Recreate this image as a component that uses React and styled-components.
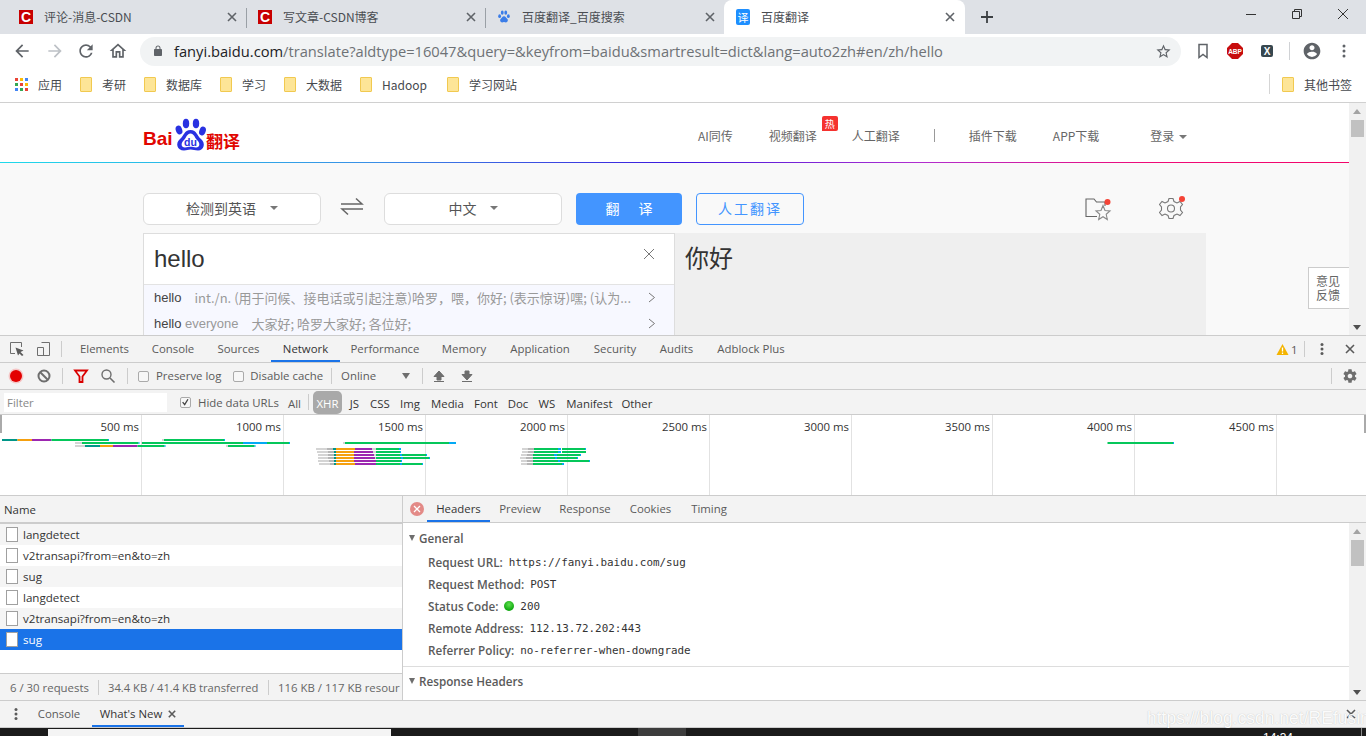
import React from 'react';
import styled, { createGlobalStyle } from 'styled-components';

const UI_FONT = '"Open Sans", "Noto Sans CJK SC", sans-serif';
const CJK_FONT = '"Noto Sans CJK SC", "Open Sans", sans-serif';

const GlobalStyle = createGlobalStyle`
    html, body {
        margin: 0;
        padding: 0;
        width: 1366px;
        height: 736px;
        overflow: hidden;
        background: #fff;
    }
`;

const Screen = styled.div`
    position: relative;
    display: flex;
    flex-direction: column;
    width: 1366px;
    height: 736px;
    overflow: hidden;
    font-family: ${UI_FONT};
    color: #333;
`;

/* browser chrome */
const TabStrip = styled.div`
    display: flex;
    align-items: stretch;
    height: 34px;
    padding-left: 8px;
    background: #dee1e6;
    flex-shrink: 0;
`;

const Tab = styled.div`
    display: flex;
    align-items: center;
    width: ${(p) => (p.$active ? 241 : 239)}px;
    height: 34px;
    padding-left: ${(p) => (p.$active ? 12 : 11)}px;
    box-sizing: border-box;
    flex-shrink: 0;
    margin-left: ${(p) => (p.$active ? -1 : 0)}px;
    border-radius: 8px 8px 0 0;
    background: ${(p) => (p.$active ? '#fff' : 'transparent')};
`;

const TabTitle = styled.span`
    flex: 1;
    margin-left: 11px;
    padding-bottom: 2px;
    font-family: ${CJK_FONT};
    font-size: 12px;
    color: #4a4d52;
    white-space: nowrap;
`;

const TabClose = styled.svg`
    width: 10px;
    height: 10px;
    margin-right: 3px;
    flex-shrink: 0;
`;

const CloseSlot = styled.div`
    display: flex;
    margin-right: 7px;
`;

const TabDivider = styled.div`
    width: 1px;
    height: 20px;
    margin-top: 8px;
    background: #9aa0a6;
    flex-shrink: 0;
    margin-left: -1px;
`;

const CsdnIcon = styled.span`
    width: 14px;
    height: 14px;
    flex-shrink: 0;
    background: #c80000;
    color: #fff;
    font: bold 14px/14px "Liberation Sans", sans-serif;
    text-align: center;
`;

const FanyiIcon = styled.span`
    width: 14px;
    height: 16px;
    flex-shrink: 0;
    border-radius: 2px;
    background: #1e8fff;
    color: #fff;
    font: 11px/16px ${CJK_FONT};
    text-align: center;
`;

const PlusButton = styled.svg`
    width: 12px;
    height: 12px;
    margin: 11px 0 0 16px;
`;

const WindowControls = styled.div`
    display: flex;
    margin-left: auto;
    padding-right: 17px;
    gap: 34px;
    align-items: flex-start;
    padding-top: 8px;
`;

const Toolbar = styled.div`
    display: flex;
    align-items: center;
    height: 34px;
    flex-shrink: 0;
    background: #fff;
`;

const NavIcon = styled.svg`
    width: ${(p) => p.$size || 20}px;
    height: ${(p) => p.$size || 20}px;
    margin-left: ${(p) => p.$ml || 0}px;
    margin-right: ${(p) => p.$mr || 0}px;
    flex-shrink: 0;
    fill: ${(p) => p.$color || '#5f6368'};
`;

const Omnibox = styled.div`
    display: flex;
    align-items: center;
    width: 1041px;
    height: 29px;
    margin-left: 12px;
    padding-left: 12px;
    box-sizing: border-box;
    border-radius: 15px;
    background: #f1f3f4;
    flex-shrink: 0;
`;

const UrlText = styled.div`
    flex: 1;
    margin-left: 10px;
    font-size: 14.68px;
    color: #6e7276;
    white-space: nowrap;
    b {
        font-weight: 400;
        color: #202124;
    }
`;

const ToolbarSep = styled.div`
    width: 1px;
    height: 18px;
    margin-left: 14px;
    background: #d0d2d5;
`;

const BookmarkBar = styled.div`
    display: flex;
    align-items: center;
    height: 35px;
    box-sizing: border-box;
    flex-shrink: 0;
    padding: 0 0 2px 15px;
    border-bottom: 1px solid #d0d0d0;
    background: #fff;
`;

const Bookmark = styled.div`
    display: flex;
    align-items: center;
    margin-left: ${(p) => p.$ml || 18}px;
    margin-right: ${(p) => p.$mr || 0}px;
    font-family: ${CJK_FONT};
    font-size: 12px;
    color: #46494e;
    white-space: nowrap;
`;

const Folder = styled.span`
    width: 10px;
    height: 13px;
    margin-right: 10px;
    border: 1px solid #f1c950;
    border-radius: 1px;
    background: #fde597;
`;

const BookmarkSep = styled.div`
    width: 1px;
    height: 20px;
    margin-left: auto;
    background: #d5d5d5;
`;

/* translate page */
const Page = styled.div`
    display: flex;
    height: 232px;
    flex-shrink: 0;
    overflow: hidden;
`;

const PageBody = styled.div`
    position: relative;
    width: 1349px;
    height: 232px;
    background: #f9f9f9;
    font-family: ${CJK_FONT};
    overflow: hidden;
`;

const PageHeader = styled.div`
    display: flex;
    align-items: center;
    height: 59px;
    box-sizing: border-box;
    padding: 6px 0 0 143px;
    background: #fff;
`;

const NavLink = styled.div`
    position: relative;
    margin-left: ${(p) => p.$ml}px;
    font-size: 12px;
    color: #666;
    white-space: nowrap;
`;

const HotBadge = styled.span`
    position: absolute;
    left: 53px;
    top: -11px;
    width: 16px;
    height: 15px;
    background: #f5322f;
    color: #fff;
    font-size: 10px;
    line-height: 15px;
    text-align: center;
    border-radius: 2px 2px 2px 0;
`;

const NavDivider = styled.div`
    width: 1px;
    height: 13px;
    margin-left: 34px;
    background: #999;
`;

const Caret = styled.span`
    display: inline-block;
    margin-left: ${(p) => p.$ml || 5}px;
    border-left: 4px solid transparent;
    border-right: 4px solid transparent;
    border-top: 4px solid ${(p) => p.$color || '#777'};
    vertical-align: 2px;
`;

const GradientLine = styled.div`
    height: 1px;
    background: linear-gradient(90deg, #1fd9ea 0%, #3a8ee6 28%, #3c18de 50%, #b02ed0 68%, #ee0b78 85%, #f2056a 100%);
`;

const Controls = styled.div`
    display: flex;
    align-items: center;
    height: 32px;
    margin-top: 30px;
    padding-left: 143px;
`;

const LangSelect = styled.div`
    display: flex;
    justify-content: center;
    align-items: center;
    width: 178px;
    height: 32px;
    box-sizing: border-box;
    padding-bottom: 2px;
    border: 1px solid #ddd;
    border-radius: 6px;
    background: #fff;
    font-size: 14px;
    color: #555;
`;

const SwapIcon = styled.svg`
    width: 24px;
    height: 20px;
    margin: -6px 20px 0 19px;
`;

const TranslateButton = styled.div`
    width: 106px;
    height: 32px;
    margin-left: 14px;
    border-radius: 4px;
    background: #4395ff;
    color: #fff;
    font-size: 14px;
    line-height: 30px;
    text-align: center;
    white-space: pre;
`;

const HumanButton = styled.div`
    width: 108px;
    height: 32px;
    box-sizing: border-box;
    margin-left: 14px;
    border: 1px solid #4395ff;
    border-radius: 4px;
    color: #4395ff;
    font-size: 14px;
    line-height: 28px;
    letter-spacing: 2px;
    text-align: center;
`;

const ToolIcon = styled.svg`
    width: ${(p) => p.$w}px;
    height: 28px;
    margin-left: ${(p) => p.$ml}px;
    margin-top: -4px;
    flex-shrink: 0;
`;

const Panels = styled.div`
    display: flex;
    width: 1063px;
    height: 110px;
    margin: 8px 0 0 143px;
`;

const SourcePanel = styled.div`
    width: 532px;
    box-sizing: border-box;
    border: 1px solid #ddd;
    border-bottom: none;
    background: #fff;
`;

const SourceInput = styled.div`
    display: flex;
    justify-content: space-between;
    align-items: center;
    height: 50px;
    padding: 0 19px 0 10px;
    border-bottom: 1px solid #e3e3e3;
    font-family: "Liberation Sans", sans-serif;
    font-size: 24px;
    color: #333;
`;

const ClearIcon = styled.svg`
    width: 12px;
    height: 12px;
    margin-top: -10px;
`;

const Suggestions = styled.div`
    height: 60px;
    background: #f7f8ff;
`;

const SuggestionRow = styled.div`
    display: flex;
    align-items: center;
    height: 26px;
    box-sizing: border-box;
    padding: 0 18px 2px 10px;
    font-size: 13px;
    color: #999;
`;

const SuggestionWord = styled.span`
    color: #444;
    font-family: "Liberation Sans", sans-serif;
    em {
        font-style: normal;
        color: #999;
    }
`;

const SuggestionText = styled.span`
    flex: 1;
    min-width: 0;
    margin-left: 13px;
    white-space: nowrap;
`;

const ChevronIcon = styled.svg`
    width: 8px;
    height: 11px;
    margin-left: 4px;
    flex-shrink: 0;
`;

const TargetPanel = styled.div`
    flex: 1;
    padding: 6px 10px;
    background: #efefef;
    font-size: 24px;
    line-height: 36px;
    color: #333;
`;

const Feedback = styled.div`
    position: absolute;
    right: 0;
    top: 164px;
    width: 41px;
    height: 42px;
    box-sizing: border-box;
    padding: 6px 0 0 7px;
    border: 1px solid #ccc;
    border-right: none;
    background: #fff;
    font-size: 12px;
    line-height: 14px;
    color: #666;
`;

const Scrollbar = styled.div`
    position: relative;
    width: 17px;
    background: #f1f1f1;
    flex-shrink: 0;
    height: ${(p) => p.$h}px;
`;

const ScrollThumb = styled.div`
    position: absolute;
    left: 2px;
    top: ${(p) => p.$top}px;
    width: 13px;
    height: ${(p) => p.$h}px;
    background: #c1c1c1;
`;

const ScrollArrow = styled.div`
    position: absolute;
    left: 4px;
    ${(p) => (p.$down ? 'bottom: 5px;' : 'top: 6px;')}
    border-left: 4.5px solid transparent;
    border-right: 4.5px solid transparent;
    ${(p) => (p.$down ? 'border-top: 5px solid #505050;' : 'border-bottom: 5px solid #a3a3a3;')}
`;

/* devtools */
const DevTools = styled.div`
    display: flex;
    flex-direction: column;
    height: 393px;
    flex-shrink: 0;
    background: #f3f3f3;
    font-size: 11.4px;
    color: #5a5a5a;
`;

const DevBar = styled.div`
    display: flex;
    align-items: center;
    height: ${(p) => p.$h}px;
    box-sizing: border-box;
    flex-shrink: 0;
    border-top: ${(p) => (p.$top ? '1px solid #ccc' : 'none')};
    border-bottom: 1px solid #ccc;
    background: #f3f3f3;
`;

const DevTab = styled.div`
    display: flex;
    align-items: center;
    justify-content: center;
    width: ${(p) => p.$w}px;
    height: 100%;
    margin-left: ${(p) => p.$ml || 0}px;
    box-sizing: border-box;
    flex-shrink: 0;
    white-space: nowrap;
    color: ${(p) => (p.$active ? '#333' : '#5a5a5a')};
    border-bottom: 2px solid ${(p) => (p.$active ? '#1a73e8' : 'transparent')};
    padding-top: 1px;
`;

const DevIcon = styled.svg`
    width: ${(p) => p.$size || 16}px;
    height: ${(p) => p.$size || 16}px;
    margin-left: ${(p) => p.$ml || 0}px;
    flex-shrink: 0;
`;

const DevSep = styled.div`
    width: 1px;
    height: 16px;
    margin-left: ${(p) => p.$ml || 0}px;
    background: #ccc;
    flex-shrink: 0;
`;

const CheckBox = styled.span`
    display: flex;
    width: 11px;
    height: 11px;
    margin-left: ${(p) => p.$ml}px;
    flex-shrink: 0;
    border: 1px solid #aaa;
    border-radius: 2px;
    box-sizing: border-box;
    background: #f7f7f7;
`;

const BarLabel = styled.span`
    margin-left: ${(p) => p.$ml}px;
    padding-bottom: ${(p) => p.$pb || 0}px;
    padding-top: ${(p) => p.$pt || 0}px;
    white-space: nowrap;
`;

const FilterInput = styled.div`
    width: 163px;
    height: 19px;
    margin-left: 4px;
    padding-left: 3px;
    box-sizing: border-box;
    background: #fff;
    color: #888;
    font-size: 11.4px;
    line-height: 19px;
    flex-shrink: 0;
`;

const TypeChip = styled.span`
    display: flex;
    align-items: center;
    justify-content: center;
    width: ${(p) => p.$w}px;
    height: 23px;
    box-sizing: border-box;
    padding-top: 2px;
    flex-shrink: 0;
    border-radius: ${(p) => (p.$active ? '5px' : '0')};
    background: ${(p) => (p.$active ? '#a9a9a9' : 'transparent')};
    color: ${(p) => (p.$active ? '#fff' : '#333')};
`;

const Overview = styled.div`
    position: relative;
    display: flex;
    height: 81px;
    box-sizing: border-box;
    flex-shrink: 0;
    border-bottom: 1px solid #ccc;
    background: #fff;
`;

const TimeColumn = styled.div`
    width: ${(p) => p.$w}px;
    flex-shrink: 0;
    box-sizing: border-box;
    border-right: 1px solid #e2e2e2;
    padding: 4px 2px 0 0;
    color: #333;
    font-size: 11.4px;
    text-align: right;
    white-space: nowrap;
`;

const Waterfall = styled.svg`
    position: absolute;
    left: 0;
    top: 0;
    width: 1366px;
    height: 80px;
`;

const OverviewHandle = styled.div`
    position: absolute;
    top: 0;
    ${(p) => (p.$right ? 'right: 0;' : 'left: 0;')}
    width: 2px;
    height: 18px;
    background: #aaa;
`;

const Split = styled.div`
    display: flex;
    height: 204px;
    flex-shrink: 0;
    border-bottom: 1px solid #ccc;
`;

const NamePane = styled.div`
    display: flex;
    flex-direction: column;
    width: 402px;
    flex-shrink: 0;
    border-right: 1px solid #ccc;
    background: #fff;
`;

const NameHeader = styled.div`
    height: 28px;
    box-sizing: border-box;
    padding-left: 4px;
    border-bottom: 2px solid #ccc;
    background: #f3f3f3;
    line-height: 27px;
    color: #333;
`;

const RequestRow = styled.div`
    display: flex;
    align-items: center;
    height: 21px;
    padding-left: 6px;
    font-size: 11.6px;
    background: ${(p) => (p.$selected ? '#1a73e8' : p.$odd ? '#f5f5f5' : '#fff')};
    color: ${(p) => (p.$selected ? '#fff' : '#333')};
`;

const FileIcon = styled.span`
    width: 12px;
    height: 15px;
    margin-right: 5px;
    box-sizing: border-box;
    border: 1px solid #a0a0a0;
    background: #fff;
`;

const StatusBar = styled.div`
    display: flex;
    align-items: center;
    height: 27px;
    margin-top: auto;
    box-sizing: border-box;
    border-top: 1px solid #ccc;
    background: #f3f3f3;
    overflow: hidden;
    white-space: nowrap;
`;

const StatusItem = styled.span`
    flex-shrink: 0;
    padding-left: ${(p) => p.$pl}px;
    width: ${(p) => p.$w}px;
    box-sizing: border-box;
    border-right: ${(p) => (p.$last ? 'none' : '1px solid #ccc')};
    font-size: ${(p) => p.$size || 11.4}px;
    line-height: 15px;
    color: #666;
`;

const DetailPane = styled.div`
    flex: 1;
    min-width: 0;
    display: flex;
    flex-direction: column;
    background: #fff;
`;

const DetailTabs = styled.div`
    display: flex;
    align-items: center;
    height: 27px;
    box-sizing: border-box;
    flex-shrink: 0;
    border-bottom: 1px solid #ccc;
    background: #f3f3f3;
`;

const DetailBody = styled.div`
    display: flex;
    flex: 1;
    min-height: 0;
`;

const DetailScroll = styled.div`
    flex: 1;
    min-width: 0;
`;

const GeneralBlock = styled.div`
    height: 144px;
    box-sizing: border-box;
    padding-top: 7px;
    border-bottom: 1px solid #ddd;
`;

const SectionTitle = styled.div`
    display: flex;
    align-items: center;
    height: 16px;
    margin-top: ${(p) => p.$mt || 0}px;
    margin-bottom: ${(p) => p.$mb || 0}px;
    padding-left: 6px;
    font-size: 11.7px;
    font-weight: 600;
    color: #5a5a5a;
`;

const TriangleDown = styled.span`
    width: 0;
    height: 0;
    margin-right: 4px;
    border-left: 3.5px solid transparent;
    border-right: 3.5px solid transparent;
    border-top: 6px solid #6e6e6e;
`;

const HeaderRow = styled.div`
    display: flex;
    align-items: center;
    height: 22px;
    padding-left: 25px;
    white-space: nowrap;
`;

const HeaderName = styled.span`
    font-size: 11.7px;
    font-weight: 600;
    color: #5a5a5a;
`;

const HeaderValue = styled.span`
    margin-left: 6px;
    font-family: "DejaVu Sans Mono", monospace;
    font-size: 10.9px;
    color: #333;
`;

const StatusDot = styled.span`
    width: 10px;
    height: 10px;
    margin-left: 6px;
    border-radius: 50%;
    background: radial-gradient(circle at 50% 35%, #5fe04f, #0fa80f 70%);
`;

const Taskbar = styled.div`
    display: flex;
    height: 8px;
    flex-shrink: 0;
    background: #1b1b1b;
    overflow: hidden;
`;

const TaskWhite = styled.div`
    width: 343px;
    margin: 1px 0 0 48px;
    background: #f4f4f4;
`;

const TaskActive = styled.div`
    width: 48px;
    margin-left: 247px;
    background: #3c3c3c;
`;

const TaskClock = styled.div`
    margin-left: 577px;
    padding-top: 4px;
    color: #fff;
    font-family: "Liberation Sans", sans-serif;
    font-size: 12px;
    line-height: 12px;
`;

const TaskEdge = styled.div`
    width: 1px;
    margin-left: 68px;
    background: #8a8a8a;
`;

const Watermark = styled.div`
    position: absolute;
    left: 1147px;
    top: 707px;
    font-family: "Liberation Sans", sans-serif;
    font-size: 17.5px;
    line-height: 22px;
    color: rgba(255, 255, 255, 0.95);
    text-shadow: 0 0 1px rgba(130, 130, 130, 0.5);
    white-space: nowrap;
`;

const LogoBox = styled.svg`
    width: 97px;
    height: 36px;
    flex-shrink: 0;
    margin-top: -1px;
`;

const XMark = ({ color = '#5f6368', width = 1.6 }) => (
    <path d="M1 1 L9 9 M9 1 L1 9" stroke={color} strokeWidth={width} fill="none" />
);

const paths = {
    back: 'M20 11H7.83l5.59-5.59L12 4l-8 8 8 8 1.41-1.41L7.83 13H20v-2z',
    forward: 'M12 4l-1.41 1.41L16.17 11H4v2h12.17l-5.58 5.59L12 20l8-8z',
    reload: 'M17.65 6.35A7.958 7.958 0 0 0 12 4c-4.42 0-7.99 3.58-7.99 8s3.57 8 7.99 8c3.73 0 6.84-2.55 7.73-6h-2.08A5.99 5.99 0 0 1 12 18c-3.31 0-6-2.69-6-6s2.69-6 6-6c1.66 0 3.14.69 4.22 1.78L13 11h7V4l-2.35 2.35z',
    home: 'M12 5.69l5 4.5V18h-2v-6H9v6H7v-7.81l5-4.5M12 3L2 12h3v8h6v-6h2v6h6v-8h3L12 3z',
    lock: 'M18 8h-1V6c0-2.76-2.24-5-5-5S7 3.24 7 6v2H6c-1.1 0-2 .9-2 2v10c0 1.1.9 2 2 2h12c1.1 0 2-.9 2-2V10c0-1.1-.9-2-2-2zM9 6c0-1.66 1.34-3 3-3s3 1.34 3 3v2H9V6z',
    star: 'M22 9.24l-7.19-.62L12 2 9.19 8.63 2 9.24l5.46 4.73L5.82 21 12 17.27 18.18 21l-1.63-7.03L22 9.24zM12 15.4l-3.76 2.27 1-4.28-3.32-2.88 4.38-.38L12 6.1l1.71 4.04 4.38.38-3.32 2.88 1 4.28L12 15.4z',
    account: 'M12 2C6.48 2 2 6.48 2 12s4.48 10 10 10 10-4.48 10-10S17.52 2 12 2zm0 3c1.66 0 3 1.34 3 3s-1.34 3-3 3-3-1.34-3-3 1.34-3 3-3zm0 14.2a7.2 7.2 0 0 1-6-3.22c.03-1.99 4-3.08 6-3.08 1.99 0 5.97 1.09 6 3.08a7.2 7.2 0 0 1-6 3.22z',
    gear: 'M19.43 12.98c.04-.32.07-.64.07-.98s-.03-.66-.07-.98l2.11-1.65c.19-.15.24-.42.12-.64l-2-3.46c-.12-.22-.39-.3-.61-.22l-2.49 1c-.52-.4-1.08-.73-1.69-.98l-.38-2.65A.488.488 0 0 0 14 2h-4c-.25 0-.46.18-.49.42l-.38 2.65c-.61.25-1.17.59-1.69.98l-2.49-1c-.23-.09-.49 0-.61.22l-2 3.46c-.13.22-.07.49.12.64l2.11 1.65c-.04.32-.07.65-.07.98s.03.66.07.98l-2.11 1.65c-.19.15-.24.42-.12.64l2 3.46c.12.22.39.3.61.22l2.49-1c.52.4 1.08.73 1.69.98l.38 2.65c.03.24.24.42.49.42h4c.25 0 .46-.18.49-.42l.38-2.65c.61-.25 1.17-.59 1.69-.98l2.49 1c.23.09.49 0 .61-.22l2-3.46c.12-.22.07-.49-.12-.64l-2.11-1.65zM12 15.5c-1.93 0-3.5-1.57-3.5-3.5s1.57-3.5 3.5-3.5 3.5 1.57 3.5 3.5-1.57 3.5-3.5 3.5z',
};

const PawFavicon = () => (
    <DevIcon $size={14} viewBox="0 0 16 16">
        <ellipse cx="3" cy="7" rx="1.6" ry="2.2" fill="#3b7de8" />
        <ellipse cx="6" cy="3" rx="1.6" ry="2.3" fill="#3b7de8" />
        <ellipse cx="10" cy="3" rx="1.6" ry="2.3" fill="#3b7de8" />
        <ellipse cx="13" cy="7" rx="1.6" ry="2.2" fill="#3b7de8" />
        <path d="M8 7c-2 0-2.3 2-3.6 3-1.6 1.3-.7 4.3 1.6 4.2 1 0 1.3-.4 2-.4s1 .4 2 .4c2.3.1 3.2-2.9 1.6-4.2C10.3 9 10 7 8 7z" fill="#3b7de8" />
    </DevIcon>
);

const tabs = [
    { title: '评论-消息-CSDN', icon: 'csdn' },
    { title: '写文章-CSDN博客', icon: 'csdn' },
    { title: '百度翻译_百度搜索', icon: 'paw' },
    { title: '百度翻译', icon: 'fanyi', active: true },
];

const bookmarks = [
    { label: '考研', ml: 18 },
    { label: '数据库', ml: 18 },
    { label: '学习', ml: 18 },
    { label: '大数据', ml: 18 },
    { label: 'Hadoop', ml: 18 },
    { label: '学习网站', ml: 20 },
];

const panelTabs = [
    ['Elements', 71], ['Console', 66], ['Sources', 65], ['Network', 69], ['Performance', 90],
    ['Memory', 68], ['Application', 84], ['Security', 66], ['Audits', 57], ['Adblock Plus', 92],
];

const detailTabs = [['Preview', 60], ['Response', 70], ['Cookies', 61], ['Timing', 56]];

const typeChips = [
    ['XHR', 29, 4], ['JS', 11, 7], ['CSS', 20, 10], ['Img', 20, 10], ['Media', 33, 11],
    ['Font', 24, 10], ['Doc', 20, 10], ['WS', 18, 10], ['Manifest', 45, 11], ['Other', 30, 10],
];

// the last tick sits a pixel closer on the 3500 ms column
const timeColumns = [
    ['500 ms', 142], ['1000 ms', 142], ['1500 ms', 142], ['2000 ms', 142], ['2500 ms', 142],
    ['3000 ms', 142], ['3500 ms', 141], ['4000 ms', 142], ['4500 ms', 142], ['', 90],
];

const requests = ['langdetect', 'v2transapi?from=en&to=zh', 'sug', 'langdetect', 'v2transapi?from=en&to=zh', 'sug'];

const headerRows = [
    ['Request URL:', 'https://fanyi.baidu.com/sug'],
    ['Request Method:', 'POST'],
    ['Status Code:', '200', true],
    ['Remote Address:', '112.13.72.202:443'],
    ['Referrer Policy:', 'no-referrer-when-downgrade'],
];

const C = {
    T: '#009688', O: '#f5a00f', P: '#9c27b0', G: '#05c75a', B: '#03a9f4', L: '#d4d4d4', D: '#b5b5b5',
};

// [top of the row inside the overview, from, to, colour]
const bars = [
    [24, 2, 17.5, 'T'], [24, 17.5, 32, 'O'], [24, 32, 51.5, 'P'], [24, 51.5, 108, 'G'], [24, 108, 109, 'B'],
    [24, 162, 164, 'L'], [24, 164, 224, 'G'], [24, 224, 225, 'B'],
    [27, 75, 82, 'L'], [27, 82, 138.5, 'G'], [27, 138.5, 139.5, 'B'], [27, 141, 142, 'L'], [27, 142, 243, 'G'],
    [27, 243, 267, 'B'], [27, 267, 289, 'G'], [27, 289, 290, 'B'], [27, 343, 345, 'L'], [27, 345, 449, 'G'], [27, 449, 456, 'B'],
    [27, 1107.5, 1173, 'G'], [27, 1173, 1174, 'B'],
    [30, 75, 85, 'L'], [30, 85, 100, 'T'], [30, 100, 113, 'O'], [30, 113, 137.5, 'P'], [30, 137.5, 164.5, 'G'], [30, 164.5, 165.5, 'B'],
    [30, 226, 228, 'L'], [30, 228, 254.5, 'G'], [30, 254.5, 255.5, 'B'],
    // second burst
    [33, 316, 327, 'L'], [33, 327, 333, 'D'], [33, 333, 336, 'T'], [33, 336, 355, 'O'], [33, 355, 372, 'P'], [33, 372, 376, 'L'], [33, 376, 399, 'G'], [33, 399, 401, 'B'],
    [36, 317, 328, 'L'], [36, 328, 334, 'D'], [36, 334, 336, 'T'], [36, 336, 354, 'O'], [36, 354, 373, 'P'], [36, 373, 376, 'L'], [36, 376, 400, 'G'], [36, 400, 401, 'B'],
    [39, 318, 328, 'L'], [39, 328, 334, 'D'], [39, 334, 336, 'T'], [39, 336, 354, 'O'], [39, 354, 374, 'P'], [39, 374, 376, 'L'], [39, 376, 400, 'G'], [39, 400, 402, 'B'], [39, 402, 426, 'G'], [39, 426, 427, 'B'],
    [42, 318, 328, 'L'], [42, 328, 334, 'D'], [42, 334, 336, 'T'], [42, 336, 354, 'O'], [42, 354, 375, 'P'], [42, 375, 376, 'L'], [42, 376, 401, 'G'], [42, 401, 403, 'B'], [42, 403, 429, 'G'], [42, 429, 430, 'B'],
    [45, 318, 329, 'L'], [45, 329, 334, 'D'], [45, 334, 336, 'T'], [45, 336, 354, 'O'], [45, 354, 376, 'P'], [45, 376, 401, 'G'], [45, 401, 402, 'B'],
    [48, 319, 330, 'L'], [48, 330, 334, 'D'], [48, 334, 336, 'T'], [48, 336, 355, 'O'], [48, 355, 376, 'P'], [48, 376, 400, 'G'], [48, 400, 402, 'B'], [48, 402, 422, 'G'], [48, 422, 423, 'B'],
    // third burst
    [33, 522, 528, 'L'], [33, 528, 534, 'D'], [33, 534, 558, 'G'], [33, 558, 561, 'B'], [33, 562, 585, 'G'], [33, 585, 586, 'B'],
    [36, 522, 528, 'L'], [36, 528, 534, 'D'], [36, 534, 558, 'G'], [36, 558, 561, 'B'], [36, 562, 586, 'G'],
    [39, 521, 527, 'L'], [39, 527, 533, 'D'], [39, 533, 554, 'G'], [39, 554, 557, 'B'], [39, 557, 580, 'G'], [39, 580, 581, 'B'],
    [42, 520, 526, 'L'], [42, 526, 533, 'D'], [42, 533, 555, 'G'], [42, 555, 557, 'B'], [42, 557, 577, 'G'], [42, 577, 578, 'B'],
    [45, 521, 527, 'L'], [45, 527, 533, 'D'], [45, 533, 558, 'G'], [45, 558, 560, 'B'], [45, 560, 589, 'G'], [45, 589, 590, 'B'],
    [48, 521, 527, 'L'], [48, 527, 533, 'D'], [48, 533, 562, 'G'], [48, 562, 564, 'B'],
];

const TabIcon = ({ kind }) => {
    if (kind === 'csdn') return <CsdnIcon>C</CsdnIcon>;
    if (kind === 'fanyi') return <FanyiIcon>译</FanyiIcon>;
    return <PawFavicon />;
};

const App = () => (
    <Screen>
        <GlobalStyle />
        <TabStrip>
            {tabs.map((tab, i) => (
                <React.Fragment key={tab.title}>
                    <Tab $active={tab.active}>
                        <TabIcon kind={tab.icon} />
                        <TabTitle>{tab.title}</TabTitle>
                        <CloseSlot>
                            <TabClose viewBox="0 0 10 10"><XMark /></TabClose>
                        </CloseSlot>
                    </Tab>
                    {i < 2 && <TabDivider />}
                </React.Fragment>
            ))}
            <PlusButton viewBox="0 0 12 12"><path d="M6 0V12M0 6H12" stroke="#3c4043" strokeWidth="1.8" /></PlusButton>
            <WindowControls>
                <DevIcon $size={12} viewBox="0 0 12 12"><path d="M1 6.5H11" stroke="#333" /></DevIcon>
                <DevIcon $size={12} viewBox="0 0 12 12"><path d="M1.5 3.5H8.5V10.5H1.5ZM3.5 3.5V1.5H10.5V8.5H8.5" stroke="#333" fill="none" /></DevIcon>
                <DevIcon $size={12} viewBox="0 0 12 12"><path d="M1 1L11 11M11 1L1 11" stroke="#333" /></DevIcon>
            </WindowControls>
        </TabStrip>

        <Toolbar>
            <NavIcon $ml={12} viewBox="0 0 24 24"><path d={paths.back} /></NavIcon>
            <NavIcon $ml={13} $color="#bdc1c6" viewBox="0 0 24 24"><path d={paths.forward} /></NavIcon>
            <NavIcon $ml={11} viewBox="0 0 24 24"><path d={paths.reload} /></NavIcon>
            <NavIcon $ml={12} viewBox="0 0 24 24"><path d={paths.home} /></NavIcon>
            <Omnibox>
                <NavIcon $size={12} viewBox="0 0 24 24"><path d={paths.lock} /></NavIcon>
                <UrlText><b>fanyi.baidu.com</b>/translate?aldtype=16047&amp;query=&amp;keyfrom=baidu&amp;smartresult=dict&amp;lang=auto2zh#en/zh/hello</UrlText>
                <NavIcon $size={17} $mr={9} viewBox="0 0 24 24"><path d={paths.star} /></NavIcon>
            </Omnibox>
            <NavIcon $ml={14} $size={16} viewBox="0 0 16 16"><path d="M4 1.5H12V14.5L8 11.5L4 14.5Z" fill="none" stroke="#5f6368" strokeWidth="1.5" /></NavIcon>
            <NavIcon $ml={16} $size={16} viewBox="0 0 16 16">
                <path d="M5 0H11L16 5V11L11 16H5L0 11V5Z" fill="#c70d0d" />
                <text x="8" y="10.5" fontSize="6.5" fontWeight="700" fontFamily="Liberation Sans" fill="#fff" textAnchor="middle">ABP</text>
            </NavIcon>
            <NavIcon $ml={16} $size={16} viewBox="0 0 16 16">
                <rect x="2" y="2" width="12" height="12" rx="2" fill="#37474f" />
                <text x="8" y="11.5" fontSize="10" fontWeight="700" fontFamily="Liberation Sans" fill="#fff" textAnchor="middle">X</text>
            </NavIcon>
            <ToolbarSep />
            <NavIcon $ml={12} viewBox="0 0 24 24"><path d={paths.account} /></NavIcon>
            <NavIcon $ml={14} $size={16} viewBox="0 0 16 16">
                <circle cx="8" cy="3" r="1.5" /><circle cx="8" cy="8" r="1.5" /><circle cx="8" cy="13" r="1.5" />
            </NavIcon>
        </Toolbar>

        <BookmarkBar>
            <DevIcon $size={13} viewBox="0 0 13 13">
                {['#ea4335', '#fbbc05', '#4285f4', '#34a853', '#ea4335', '#fbbc05', '#4285f4', '#34a853', '#ea4335'].map((fill, i) => (
                    <rect key={i} x={(i % 3) * 5} y={Math.floor(i / 3) * 5} width="3" height="3" fill={fill} />
                ))}
            </DevIcon>
            <Bookmark $ml={10}>应用</Bookmark>
            {bookmarks.map((item) => (
                <Bookmark key={item.label} $ml={item.ml}><Folder />{item.label}</Bookmark>
            ))}
            <BookmarkSep />
            <Bookmark $ml={12} $mr={14}><Folder />其他书签</Bookmark>
        </BookmarkBar>

        <Page>
            <PageBody>
                <PageHeader>
                    <LogoBox viewBox="0 0 97 36">
                        <text x="0" y="28" fontFamily="Liberation Sans" fontWeight="700" fontSize="19" fill="#e10601">Bai</text>
                        <ellipse cx="36" cy="13" rx="3.2" ry="4.5" fill="#2932e1" transform="rotate(-20 36 13)" />
                        <ellipse cx="43" cy="6.5" rx="3.2" ry="4.8" fill="#2932e1" />
                        <ellipse cx="53" cy="6.5" rx="3.2" ry="4.8" fill="#2932e1" />
                        <ellipse cx="59.5" cy="14" rx="3.2" ry="4.5" fill="#2932e1" transform="rotate(20 59.5 14)" />
                        <path d="M47.5 13C41 13 41 19 37 22C32 26 34 33.5 41 33.5C44 33.5 45 32.5 47.5 32.5C50 32.5 52 33.5 55 33.5C61 33.5 63 26 58 22C54 19 54 13 47.5 13Z" fill="#2932e1" />
                        <path d="M47.5 16.5C44 16.5 43.5 20.5 41 23C37.5 26 38 30.5 42 30.5C44 30.5 45.5 29.8 47.5 29.8C49.5 29.8 51 30.5 53 30.5C57 30.5 57.5 26 54 23C51.5 20.5 51 16.5 47.5 16.5Z" fill="#fff" />
                        <text x="47.5" y="29" fontFamily="Liberation Sans" fontWeight="700" fontSize="10.5" fill="#2932e1" textAnchor="middle">du</text>
                        <text x="63" y="31" fontFamily="Noto Sans CJK SC" fontWeight="700" fontSize="17" fill="#e10601">翻译</text>
                    </LogoBox>
                    <NavLink $ml={458}>AI同传</NavLink>
                    <NavLink $ml={36}>视频翻译<HotBadge>热</HotBadge></NavLink>
                    <NavLink $ml={35}>人工翻译</NavLink>
                    <NavDivider />
                    <NavLink $ml={34}>插件下载</NavLink>
                    <NavLink $ml={36}>APP下载</NavLink>
                    <NavLink $ml={51}>登录<Caret /></NavLink>
                </PageHeader>
                <GradientLine />
                <Controls>
                    <LangSelect>检测到英语<Caret $ml={14} /></LangSelect>
                    <SwapIcon viewBox="0 0 24 20">
                        <path d="M1 8H22L16 2.5M23 13H2L8 18.5" fill="none" stroke="#666" strokeWidth="1.5" />
                    </SwapIcon>
                    <LangSelect>中文<Caret $ml={13} /></LangSelect>
                    <TranslateButton>翻      译</TranslateButton>
                    <HumanButton>人工翻译</HumanButton>
                    <ToolIcon $w={28} $ml={280} viewBox="0 0 28 28">
                        <path d="M13 23.5H2V6H10L12.5 9H21V13" fill="none" stroke="#666" strokeWidth="1.1" />
                        <path d="M19 12.5L21 17.5L26 18L22.2 21.3L23.3 26.5L19 23.7L14.7 26.5L15.8 21.3L12 18L17 17.5Z" fill="none" stroke="#888" strokeWidth="1.1" />
                        <circle cx="23.5" cy="9" r="3" fill="#f44336" />
                    </ToolIcon>
                    <ToolIcon $w={28} $ml={47} viewBox="0 0 28 28">
                        <path d="M10 5.5H14L15 8.5L18 10L21 8.5L23.5 11.5L21.5 14L21.5 17L23.5 19.5L21 22.5L18 21L15 22.5L14 25.5H10L9 22.5L6 21L3 22.5L0.5 19.5L2.5 17V14L0.5 11.5L3 8.5L6 10L9 8.5Z" fill="none" stroke="#777" strokeWidth="1.1" />
                        <circle cx="12" cy="15.5" r="3.5" fill="none" stroke="#777" strokeWidth="1.1" />
                        <circle cx="23" cy="6" r="3" fill="#f44336" />
                    </ToolIcon>
                </Controls>
                <Panels>
                    <SourcePanel>
                        <SourceInput>
                            hello
                            <ClearIcon viewBox="0 0 12 12"><path d="M1 1L11 11M11 1L1 11" stroke="#777" /></ClearIcon>
                        </SourceInput>
                        <Suggestions>
                            <SuggestionRow>
                                <SuggestionWord>hello</SuggestionWord>
                                <SuggestionText>int./n. (用于问候、接电话或引起注意)哈罗，喂，你好; (表示惊讶)嘿; (认为...</SuggestionText>
                                <ChevronIcon viewBox="0 0 8 11"><path d="M1 1L6.5 5.5L1 10" fill="none" stroke="#777" /></ChevronIcon>
                            </SuggestionRow>
                            <SuggestionRow>
                                <SuggestionWord>hello <em>everyone</em></SuggestionWord>
                                <SuggestionText>大家好; 哈罗大家好; 各位好;</SuggestionText>
                                <ChevronIcon viewBox="0 0 8 11"><path d="M1 1L6.5 5.5L1 10" fill="none" stroke="#777" /></ChevronIcon>
                            </SuggestionRow>
                        </Suggestions>
                    </SourcePanel>
                    <TargetPanel>你好</TargetPanel>
                </Panels>
                <Feedback>意见<br />反馈</Feedback>
            </PageBody>
            <Scrollbar $h={232}>
                <ScrollArrow />
                <ScrollThumb $top={17} $h={17} />
                <ScrollArrow $down />
            </Scrollbar>
        </Page>

        <DevTools>
            <DevBar $h={28} $top>
                <DevIcon $ml={9} viewBox="0 0 16 16">
                    <path d="M6 12.5H1.5V1.5H12.5V6" fill="none" stroke="#6e6e6e" />
                    <path d="M6.5 6.5L14.5 9.5L11.5 11L14.5 14L13 15L10.5 12.5L9 14.5Z" fill="#5a5a5a" />
                </DevIcon>
                <DevIcon $ml={11} viewBox="0 0 16 16">
                    <path d="M5.5 1.5H13.5V14.5H5.5M1.5 6.5H7.5V14.5H1.5Z" fill="none" stroke="#6e6e6e" />
                </DevIcon>
                <DevSep $ml={9} />
                {panelTabs.map(([name, w], i) => (
                    <DevTab key={name} $w={w} $ml={i === 0 ? 7 : 0} $active={name === 'Network'}>{name}</DevTab>
                ))}
                <DevIcon $ml={479} $size={13} viewBox="0 0 13 13">
                    <path d="M6.5 1L12.5 12H.5Z" fill="#f4b400" />
                    <path d="M6.5 4.5V8.5M6.5 9.5V11" stroke="#fff" strokeWidth="1.3" />
                </DevIcon>
                <BarLabel $ml={2}>1</BarLabel>
                <DevSep $ml={6} />
                <DevIcon $ml={9} $size={16} viewBox="0 0 16 16" fill="#5a5a5a">
                    <circle cx="8" cy="3.5" r="1.5" /><circle cx="8" cy="8" r="1.5" /><circle cx="8" cy="12.5" r="1.5" />
                </DevIcon>
                <DevIcon $ml={15} $size={10} viewBox="0 0 10 10"><XMark color="#5a5a5a" /></DevIcon>
            </DevBar>
            <DevBar $h={27}>
                <DevIcon $ml={8} viewBox="0 0 16 16">
                    <circle cx="8" cy="8" r="7.5" fill="#f5c6c6" />
                    <circle cx="8" cy="8" r="6" fill="#e30000" />
                </DevIcon>
                <DevIcon $ml={12} viewBox="0 0 16 16">
                    <circle cx="8" cy="8" r="5.5" fill="none" stroke="#6e6e6e" strokeWidth="2" />
                    <path d="M4 4L12 12" stroke="#6e6e6e" strokeWidth="2" />
                </DevIcon>
                <DevSep $ml={10} />
                <DevIcon $ml={10} viewBox="0 0 16 16">
                    <path d="M2 2.5H14L9.5 8.5V14H6.5V8.5Z" fill="none" stroke="#d90000" strokeWidth="1.8" />
                </DevIcon>
                <DevIcon $ml={11} viewBox="0 0 16 16">
                    <circle cx="6.5" cy="6.5" r="4.5" fill="none" stroke="#6e6e6e" strokeWidth="1.4" />
                    <path d="M10 10L14.5 14.5" stroke="#6e6e6e" strokeWidth="1.6" />
                </DevIcon>
                <DevSep $ml={11} />
                <CheckBox $ml={10} />
                <BarLabel $ml={7} $pb={2}>Preserve log</BarLabel>
                <CheckBox $ml={12} />
                <BarLabel $ml={6} $pb={2}>Disable cache</BarLabel>
                <DevSep $ml={8} />
                <BarLabel $ml={9} $pb={2}>Online</BarLabel>
                <DevIcon $ml={25} $size={10} viewBox="0 0 10 10"><path d="M1 2H9L5 8Z" fill="#6e6e6e" /></DevIcon>
                <DevSep $ml={11} />
                <DevIcon $ml={8} viewBox="0 0 16 16"><path d="M8 3L13 8.5H10V12H6V8.5H3ZM3 13.5H13" fill="#6e6e6e" stroke="#6e6e6e" /></DevIcon>
                <DevIcon $ml={12} viewBox="0 0 16 16"><path d="M8 12L13 6.5H10V3H6V6.5H3ZM3 13.5H13" fill="#6e6e6e" stroke="#6e6e6e" /></DevIcon>
                <DevSep $ml={856} />
                <DevIcon $ml={10} viewBox="0 0 24 24" fill="#6e6e6e"><path d={paths.gear} /></DevIcon>
            </DevBar>
            <DevBar $h={25}>
                <FilterInput>Filter</FilterInput>
                <CheckBox $ml={13}>
                    <svg viewBox="0 0 11 11" width="9" height="9"><path d="M2 5L4.5 8L8.5 1.5" fill="none" stroke="#444" strokeWidth="1.6" /></svg>
                </CheckBox>
                <BarLabel $ml={7}>Hide data URLs</BarLabel>
                <BarLabel $ml={9} $pt={2}>All</BarLabel>
                <DevSep $ml={7} />
                {typeChips.map(([name, w, ml]) => (
                    <BarLabel key={name} $ml={ml}>
                        <TypeChip $w={w} $active={name === 'XHR'}>{name}</TypeChip>
                    </BarLabel>
                ))}
            </DevBar>
            <Overview>
                {timeColumns.map(([label, w], i) => (
                    <TimeColumn key={i} $w={w}>{label}</TimeColumn>
                ))}
                <Waterfall viewBox="0 0 1366 80">
                    {bars.map(([y, from, to, c], i) => (
                        <rect key={i} x={from} y={y} width={to - from} height="2" fill={C[c]} />
                    ))}
                </Waterfall>
                <OverviewHandle />
                <OverviewHandle $right />
            </Overview>
            <Split>
                <NamePane>
                    <NameHeader>Name</NameHeader>
                    {requests.map((name, i) => (
                        <RequestRow key={i} $odd={i % 2 === 0} $selected={i === 5}>
                            <FileIcon />
                            {name}
                        </RequestRow>
                    ))}
                    <StatusBar>
                        <StatusItem $pl={10} $w={99}>6 / 30 requests</StatusItem>
                        <StatusItem $pl={9} $w={170} $size={11.2}>34.4 KB / 41.4 KB transferred</StatusItem>
                        <StatusItem $pl={9} $w={132} $last>116 KB / 117 KB resour</StatusItem>
                    </StatusBar>
                </NamePane>
                <DetailPane>
                    <DetailTabs>
                        <DevIcon $ml={7} $size={14} viewBox="0 0 14 14">
                            <circle cx="7" cy="7" r="7" fill="#e38a87" />
                            <path d="M4 4L10 10M10 4L4 10" stroke="#fff" strokeWidth="1.3" />
                        </DevIcon>
                        <DevTab $w={63} $ml={3} $active>Headers</DevTab>
                        {detailTabs.map(([name, w]) => (
                            <DevTab key={name} $w={w}>{name}</DevTab>
                        ))}
                    </DetailTabs>
                    <DetailBody>
                        <DetailScroll>
                            <GeneralBlock>
                                <SectionTitle $mb={5}><TriangleDown />General</SectionTitle>
                                {headerRows.map(([name, value, dot]) => (
                                    <HeaderRow key={name}>
                                        <HeaderName>{name}</HeaderName>
                                        {dot && <StatusDot />}
                                        <HeaderValue>{value}</HeaderValue>
                                    </HeaderRow>
                                ))}
                            </GeneralBlock>
                            <SectionTitle $mt={6}><TriangleDown />Response Headers</SectionTitle>
                        </DetailScroll>
                        <Scrollbar $h={177}>
                            <ScrollArrow />
                            <ScrollThumb $top={17} $h={26} />
                            <ScrollArrow $down />
                        </Scrollbar>
                    </DetailBody>
                </DetailPane>
            </Split>
            <DevBar $h={27}>
                <DevIcon $ml={8} viewBox="0 0 16 16" fill="#5a5a5a">
                    <circle cx="8" cy="3.5" r="1.5" /><circle cx="8" cy="8" r="1.5" /><circle cx="8" cy="12.5" r="1.5" />
                </DevIcon>
                <DevTab $w={66} $ml={2}>Console</DevTab>
                <DevTab $w={92} $active>
                    What's New
                    <DevIcon $ml={6} $size={8} viewBox="0 0 10 10"><XMark color="#5a5a5a" width={2} /></DevIcon>
                </DevTab>
                <DevIcon $ml={1162} $size={10} viewBox="0 0 10 10"><XMark color="#5a5a5a" /></DevIcon>
            </DevBar>
        </DevTools>

        <Taskbar>
            <TaskWhite />
            <TaskActive />
            <TaskClock>14:34</TaskClock>
            <TaskEdge />
        </Taskbar>
        <Watermark>https://blog.csdn.net/REfusing</Watermark>
    </Screen>
);

export default App;
